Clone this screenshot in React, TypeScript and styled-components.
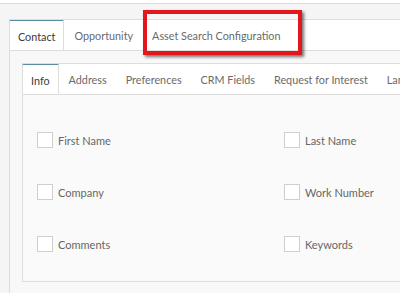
import React from "react";
import styled, { createGlobalStyle } from "styled-components";

const GlobalStyle = createGlobalStyle`
	html, body {
		margin: 0;
		padding: 0;
		background: #ffffff;
		font-family: Lato, "Open Sans", "Liberation Sans", sans-serif;
	}
`;

const outerTabs = ["Contact", "Opportunity", "Asset Search Configuration"];
const innerTabs = ["Info", "Address", "Preferences", "CRM Fields", "Request for Interest", "Language"];
const fields = ["First Name", "Last Name", "Company", "Work Number", "Comments", "Keywords"];

export default function App() {
	return (
		<>
			<GlobalStyle />
			<Page>
				<TabBar>
					{outerTabs.map((t, i) => (
						<Tab key={t} active={i === 0}>
							{t}
						</Tab>
					))}
				</TabBar>
				<OuterPanel>
					<TabBar>
						{innerTabs.map((t, i) => (
							<Tab key={t} active={i === 0}>
								{t}
							</Tab>
						))}
					</TabBar>
					<FieldPanel>
						{fields.map((f) => (
							<Field key={f}>
								<Box />
								<span>{f}</span>
							</Field>
						))}
					</FieldPanel>
				</OuterPanel>
				<Highlight />
			</Page>
		</>
	);
}

// style 영역
const Page = styled.div`
	position: relative;
	width: 400px;
	height: 290px;
	margin-top: 3px;
	padding: 15px 0 0 9px;
	box-sizing: border-box;
	background: #f5f5f5;
	border-top: 1px solid #dcdcdc;
	overflow: hidden;
`;

const TabBar = styled.div`
	display: flex;
	height: 30px;
	background: #ffffff;
	border-top: 1px solid #dddddd;
	border-bottom: 1px solid #dddddd;
	white-space: nowrap;
	overflow: hidden;
`;

const Tab = styled.div<{ active?: boolean }>`
	display: flex;
	align-items: center;
	flex-shrink: 0;
	padding: 0 8px;
	margin-top: ${(p) => (p.active ? "-1px" : "0")};
	margin-bottom: ${(p) => (p.active ? "-1px" : "0")};
	font-size: 10.8px;
	color: ${(p) => (p.active ? "#3a3a3a" : "#6a6a6a")};
	background: #ffffff;
	border-top: ${(p) => (p.active ? "2px solid #5a8ca3" : "none")};
	border-left: ${(p) => (p.active ? "1px solid #dddddd" : "none")};
	border-right: ${(p) => (p.active ? "1px solid #dddddd" : "none")};
	& + & {
		padding: 0 9px 0 10px;
	}
`;

const OuterPanel = styled.div`
	padding: 12px 0 11px 12px;
	background: #f8f8f8;
	border-left: 1px solid #dddddd;
`;

const FieldPanel = styled.div`
	display: grid;
	grid-template-columns: 247px 1fr;
	row-gap: 36px;
	padding: 37px 0 29px 14px;
	background: #fafafa;
	border-left: 1px solid #dddddd;
	border-bottom: 1px solid #dddddd;
`;

const Field = styled.label`
	display: flex;
	align-items: center;
	gap: 5px;
	height: 16px;
	font-size: 11px;
	color: #666666;
`;

const Box = styled.span`
	width: 16px;
	height: 16px;
	box-sizing: border-box;
	background: #ffffff;
	border: 1px solid #cfcfcf;
`;

const Highlight = styled.div`
	position: absolute;
	left: 143px;
	top: 6px;
	width: 159px;
	height: 45px;
	box-sizing: border-box;
	border: 4px solid #e3161c;
	box-shadow: 2px 2px 3px rgba(0, 0, 0, 0.55);
`;
